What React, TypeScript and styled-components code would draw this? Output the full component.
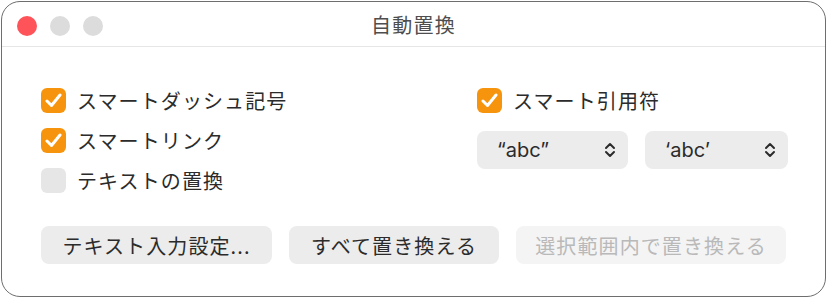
import React, { useState } from 'react';
import styled, { createGlobalStyle } from 'styled-components';

const GlobalStyle = createGlobalStyle`
    html, body {
        margin: 0;
        padding: 0;
        background: #ffffff;
    }
    body {
        font-family: "Noto Sans CJK JP", "Noto Sans", sans-serif;
        color: #2b2b2b;
    }
`;

const Window = styled.div`
    box-sizing: border-box;
    width: 825px;
    height: 296px;
    margin: 1px 0 0 1px;
    border: 1px solid #6e6e6e;
    border-radius: 19px;
    background: #ffffff;
    overflow: hidden;
    display: flex;
    flex-direction: column;
`;

const TitleBar = styled.div`
    height: 44px;
    border-bottom: 1px solid #e6e6e6;
    display: grid;
    grid-template-columns: 1fr auto 1fr;
    align-items: center;
    padding: 0 15px;
`;

const Lights = styled.div`
    display: flex;
    gap: 13px;
    padding-top: 4px;
`;

const Light = styled.span<{ $color: string }>`
    width: 20px;
    height: 20px;
    border-radius: 50%;
    background: ${p => p.$color};
`;

const Title = styled.div`
    font-size: 20px;
    letter-spacing: 1.2px;
    color: #4e4e4e;
    line-height: 1;
    padding-top: 1px;
`;

const Content = styled.div`
    padding: 33px 0 0 39px;
    display: flex;
    flex-direction: column;
`;

const Columns = styled.div`
    display: grid;
    grid-template-columns: 436px 1fr;
`;

const Column = styled.div`
    display: flex;
    flex-direction: column;
`;

const CheckRow = styled.label`
    height: 40px;
    display: flex;
    align-items: center;
    gap: 11px;
    font-size: 20px;
    letter-spacing: 1.1px;
    color: #2b2b2b;
    cursor: default;
`;

const Box = styled.span<{ $checked: boolean }>`
    width: 25px;
    height: 25px;
    border-radius: 6px;
    background: ${p => (p.$checked ? '#f7940d' : '#e6e6e6')};
    display: flex;
    align-items: center;
    justify-content: center;
    flex: none;
`;

const SelectRow = styled.div`
    display: flex;
    gap: 17px;
    margin-top: 11px;
`;

const Select = styled.div<{ $width: number }>`
    box-sizing: border-box;
    width: ${p => p.$width}px;
    height: 38px;
    border-radius: 8px;
    background: #ececec;
    display: flex;
    align-items: center;
    justify-content: space-between;
    padding: 0 12px 0 20px;
    font-family: "Inter", "Noto Sans", "Noto Sans CJK JP", sans-serif;
    font-size: 20px;
    color: #2b2b2b;
`;

const ButtonRow = styled.div`
    display: flex;
    gap: 17px;
    margin-top: 26px;
`;

const Button = styled.button<{ $width: number }>`
    box-sizing: border-box;
    width: ${p => p.$width}px;
    height: 38px;
    border: none;
    border-radius: 8px;
    background: ${p => (p.disabled ? '#f4f4f4' : '#ececec')};
    color: ${p => (p.disabled ? '#b9b9b9' : '#2b2b2b')};
    font-family: "Noto Sans CJK JP", "Noto Sans", sans-serif;
    font-size: 20px;
    letter-spacing: 1.1px;
    padding: 0;
    display: flex;
    align-items: center;
    justify-content: center;
`;

const Check = () => (
    <svg width="17" height="15" viewBox="0 0 17 15">
        <path d="M2 8 L6.5 12.5 L15 2" fill="none" stroke="#fff" strokeWidth="3" strokeLinecap="round" strokeLinejoin="round" />
    </svg>
);

const Chevrons = () => (
    <svg width="12" height="16" viewBox="0 0 12 16">
        <path d="M2 6 L6 2 L10 6 M2 10 L6 14 L10 10" fill="none" stroke="#2b2b2b" strokeWidth="2" strokeLinecap="round" strokeLinejoin="round" />
    </svg>
);

const CheckItem = ({ label, initial }: { label: string; initial: boolean }) => {
    const [checked, setChecked] = useState(initial);
    return <CheckRow onClick={() => setChecked(was => !was)}>
        <Box $checked={checked}>{checked && <Check />}</Box>
        {label}
    </CheckRow>;
};

export default function App() {
    return <>
        <GlobalStyle />
        <Window>
            <TitleBar>
                <Lights>
                    <Light $color="#fe5359" />
                    <Light $color="#dcdcdc" />
                    <Light $color="#dcdcdc" />
                </Lights>
                <Title>自動置換</Title>
                <div></div>
            </TitleBar>
            <Content>
                <Columns>
                    <Column>
                        <CheckItem label="スマートダッシュ記号" initial={true} />
                        <CheckItem label="スマートリンク" initial={true} />
                        <CheckItem label="テキストの置換" initial={false} />
                    </Column>
                    <Column>
                        <CheckItem label="スマート引用符" initial={true} />
                        <SelectRow>
                            <Select $width={151}>“abc”<Chevrons /></Select>
                            <Select $width={143}>‘abc’<Chevrons /></Select>
                        </SelectRow>
                    </Column>
                </Columns>
                <ButtonRow>
                    <Button $width={231}>テキスト入力設定...</Button>
                    <Button $width={210}>すべて置き換える</Button>
                    <Button $width={270} disabled>選択範囲内で置き換える</Button>
                </ButtonRow>
            </Content>
        </Window>
    </>;
}
